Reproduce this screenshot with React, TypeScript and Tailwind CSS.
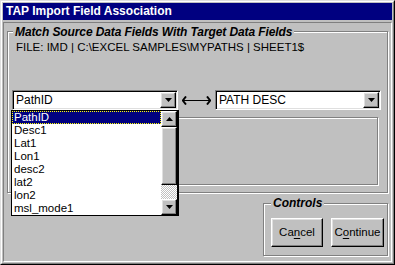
import React from 'react';

const font = { fontFamily: '"Liberation Sans", Arial, sans-serif' };

const raised =
  'border border-t-white border-l-white border-r-black border-b-black shadow-[inset_-1px_-1px_0_#808080,inset_1px_1px_0_#dfdfdf]';
const etched = 'border border-[#808080] shadow-[inset_1px_1px_0_#fff,1px_1px_0_#fff]';
const sunken =
  'border border-t-[#808080] border-l-[#808080] border-r-white border-b-white shadow-[inset_1px_1px_0_#000,inset_-1px_-1px_0_#dfdfdf]';

function DownArrow() {
  return (
    <svg width="7" height="4" viewBox="0 0 7 4">
      <path d="M0 0h7L3.5 4z" fill="#000" />
    </svg>
  );
}

function UpArrow() {
  return (
    <svg width="7" height="4" viewBox="0 0 7 4">
      <path d="M0 4h7L3.5 0z" fill="#000" />
    </svg>
  );
}

function Combo({ value }: { value: string }) {
  return (
    <div className={`w-[166px] h-[20px] bg-white flex items-center ${sunken}`}>
      <span className="flex-1 pl-[3px] text-[12px] text-black leading-none">{value}</span>
      <div className={`w-[16px] h-[16px] mr-[1px] flex items-center justify-center bg-[#c0c0c0] ${raised}`}>
        <DownArrow />
      </div>
    </div>
  );
}

const items = ['PathID', 'Desc1', 'Lat1', 'Lon1', 'desc2', 'lat2', 'lon2', 'msl_mode1'];

export default function App() {
  return (
    <div style={font} className="w-[395px] h-[265px] bg-[#c0c0c0] overflow-hidden select-none">
      <div className="w-full h-full border border-t-[#dfdfdf] border-l-[#dfdfdf] border-r-black border-b-black">
        <div className="w-full h-full border border-t-white border-l-white border-r-[#808080] border-b-[#808080] p-[1px] flex flex-col">
          {/* Title bar */}
          <div className="h-[17px] bg-[#000080] text-white font-bold text-[12px] leading-[17px] pl-[3px]">
            TAP Import Field Association
          </div>

          {/* Content panel */}
          <div className="mt-[2px] flex-1 border border-t-[#808080] border-l-[#808080] border-r-white border-b-white relative pl-[3px] pr-[3px] pt-[8px]">
            {/* Main group */}
            <div className={`relative h-[162px] ${etched} pl-[4px] pt-[9px]`}>
              <div className="absolute left-[5px] -top-[5px] bg-[#c0c0c0] px-[2px] text-[12px] leading-[11px] font-bold italic text-black tracking-[-0.1px]">
                Match Source Data Fields With Target Data Fields
              </div>
              <div className="pl-[4px] text-[11.5px] leading-[13px] text-black">
                FILE: IMD | C:\EXCEL SAMPLES\MYPATHS | SHEET1$
              </div>
              <div className="mt-[36px] flex items-center">
                <Combo value="PathID" />
                <div className="w-[37px] flex justify-center">
                  <svg width="29" height="9" viewBox="0 0 29 9">
                    <path d="M4 0.5L0.8 4.5L4 8.5" stroke="#000" strokeWidth="2" fill="none" />
                    <path d="M25 0.5L28.2 4.5L25 8.5" stroke="#000" strokeWidth="2" fill="none" />
                    <path d="M2 4.5h25" stroke="#000" strokeWidth="1" />
                  </svg>
                </div>
                <Combo value="PATH DESC" />
              </div>
              <div className={`mt-[7px] w-[366px] h-[68px] ${etched}`} />

              {/* Open dropdown list */}
              <div className="absolute left-[3px] top-[78px] w-[167px] h-[106px] bg-white border border-black shadow-[1px_0_0_#000] flex">
                <div className="flex-1">
                  {items.map((it, i) => (
                    <div
                      key={it}
                      className={`h-[13px] pl-[2px] text-[11.5px] leading-[13px] ${
                        i === 0
                          ? 'bg-[#000080] text-white outline outline-1 outline-dotted outline-[#ffff00] -outline-offset-1'
                          : 'text-black'
                      }`}
                    >
                      {it}
                    </div>
                  ))}
                </div>
                <div className="w-[16px] flex flex-col">
                  <div className={`h-[16px] flex items-center justify-center bg-[#c0c0c0] ${raised}`}>
                    <UpArrow />
                  </div>
                  <div className={`h-[58px] bg-[#c0c0c0] ${raised}`} />
                  <div className="flex-1 bg-[repeating-conic-gradient(#c0c0c0_0_25%,#fff_0_50%)] bg-[length:2px_2px]" />
                  <div className={`h-[16px] flex items-center justify-center bg-[#c0c0c0] ${raised}`}>
                    <DownArrow />
                  </div>
                </div>
              </div>
            </div>

            {/* Controls group */}
            <div className="flex justify-end mt-[10px]">
              <div className={`relative w-[125px] h-[53px] ${etched} flex gap-[8px] pl-[7px] pt-[14px]`}>
                <div className="absolute left-[7px] -top-[6px] bg-[#c0c0c0] px-[2px] text-[12px] leading-[11px] font-bold italic text-black">
                  Controls
                </div>
                <button className={`w-[52px] h-[29px] bg-[#c0c0c0] text-[11.5px] text-black ${raised}`}>
                  Ca<span className="underline underline-offset-2">n</span>cel
                </button>
                <button className={`w-[53px] h-[29px] bg-[#c0c0c0] text-[11.5px] text-black ${raised}`}>
                  C<span className="underline underline-offset-2">o</span>ntinue
                </button>
              </div>
            </div>
          </div>
        </div>
      </div>
    </div>
  );
}
